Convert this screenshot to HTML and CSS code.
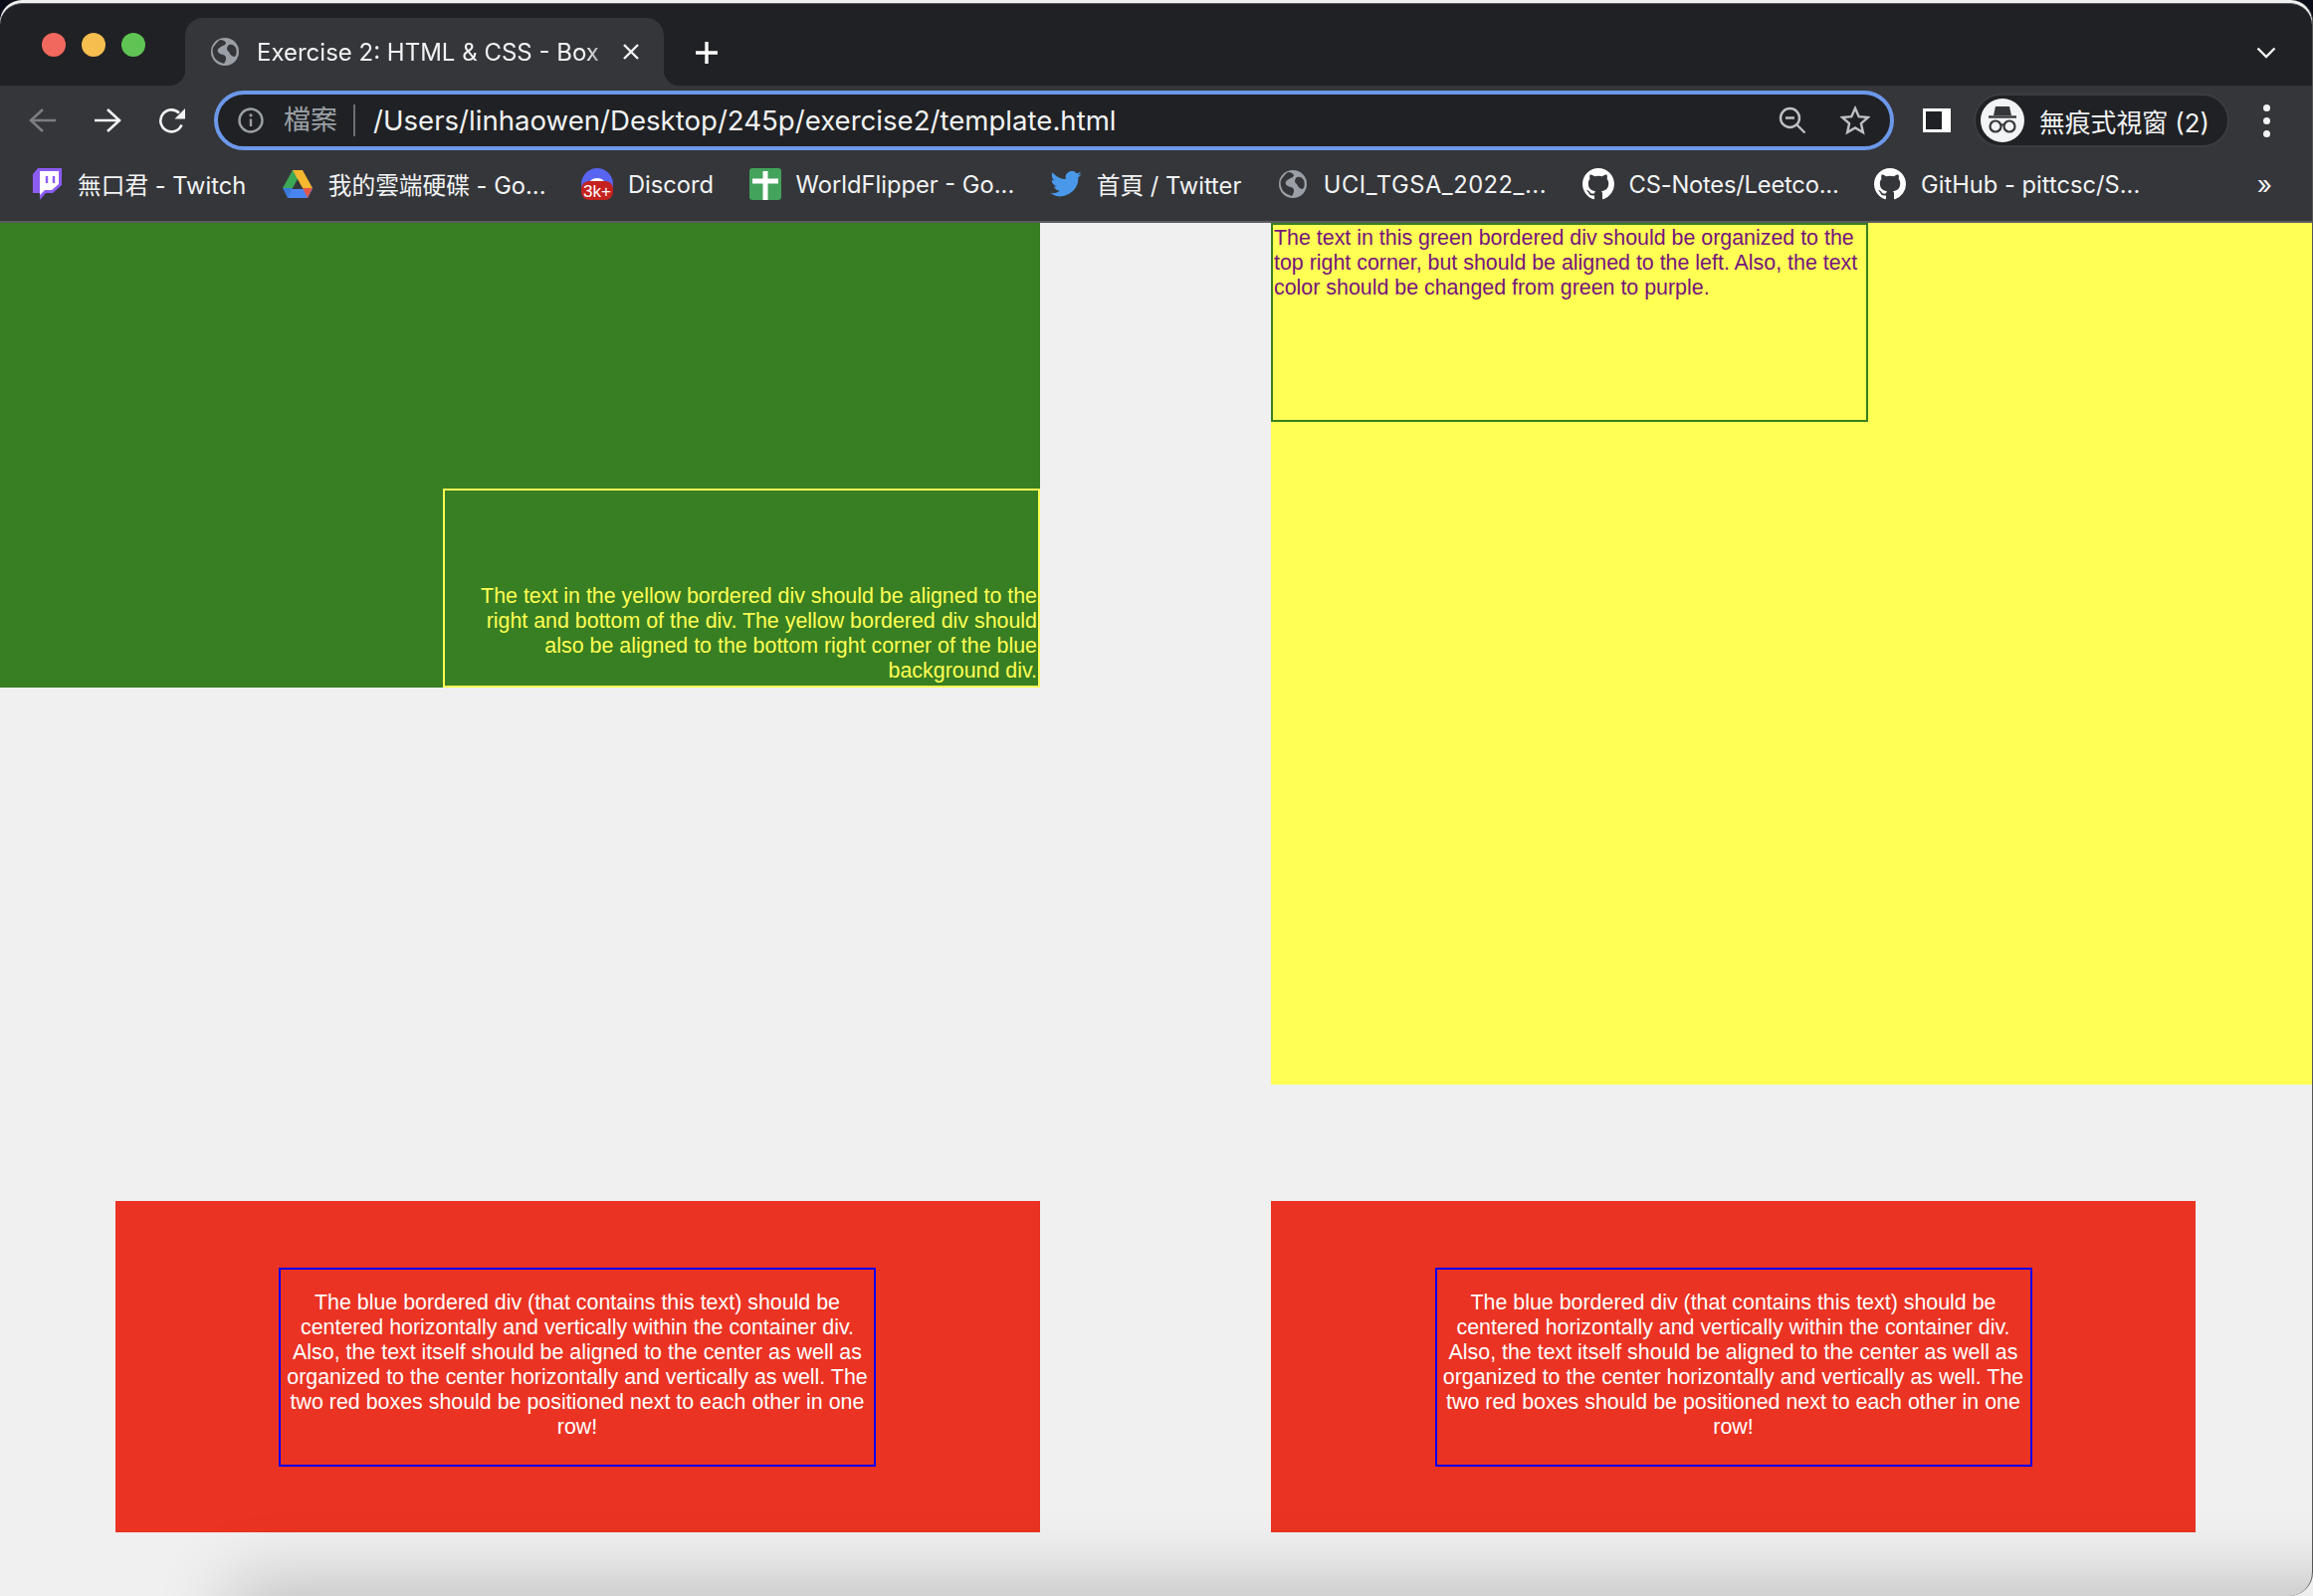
FILE: index.html
```html
<!DOCTYPE html>
<html lang="zh-Hant">
<head>
  <meta charset="UTF-8">
  <meta name="viewport" content="width=device-width, initial-scale=1.0">
  <title>Exercise 2: HTML &amp; CSS - Box Model</title>
  <link rel="stylesheet" href="styles.css">
</head>
<body>
  <svg class="sprites" width="0" height="0">
    <symbol id="globe" viewBox="0 0 28 28">
      <circle cx="14" cy="14" r="14" fill="#9aa0a6"/>
      <path d="M9 2c3 0 5 1 6 3 0 2-3 3-5 4-2 1-4 3-3 5 1 3 5 2 7 4 2 2 1 5-1 8-3-1-8-3-10-7-1-3-2-6-1-9 2-3 4-6 7-8zM18 7c3-1 5 0 7 3 1 3 1 7-1 9-2 0-4-1-5-3-1-3-3-3-3-5 0-2 1-3 2-4z" fill="#35363a"/>
    </symbol>
    <symbol id="github" viewBox="0 0 16 16">
      <path fill="#fff" d="M8 0C3.58 0 0 3.58 0 8c0 3.54 2.29 6.53 5.47 7.59.4.07.55-.17.55-.38 0-.19-.01-.82-.01-1.49-2.01.37-2.53-.49-2.69-.94-.09-.23-.48-.94-.82-1.13-.28-.15-.68-.52-.01-.53.63-.01 1.08.58 1.23.82.72 1.21 1.87.87 2.33.66.07-.52.28-.87.51-1.07-1.78-.2-3.64-.89-3.64-3.95 0-.87.31-1.59.82-2.15-.08-.2-.36-1.02.08-2.12 0 0 .67-.21 2.2.82.64-.18 1.32-.27 2-.27s1.36.09 2 .27c1.53-1.04 2.2-.82 2.2-.82.44 1.1.16 1.92.08 2.12.51.56.82 1.27.82 2.15 0 3.07-1.87 3.75-3.65 3.95.29.25.54.73.54 1.48 0 1.07-.01 1.93-.01 2.2 0 .21.15.46.55.38A8.01 8.01 0 0 0 16 8c0-4.42-3.58-8-8-8z"/>
    </symbol>
  </svg>

  <div class="window">
    <header class="tab-strip">
      <div class="lights">
        <span class="light light-red"></span>
        <span class="light light-yellow"></span>
        <span class="light light-green"></span>
      </div>
      <div class="tab">
        <svg class="favicon" width="28" height="28"><use href="#globe"/></svg>
        <span class="tab-title">Exercise 2: HTML &amp; CSS - Box</span>
        <svg class="tab-close" width="16" height="16" viewBox="0 0 16 16"><path d="M1 1l14 14M15 1L1 15" stroke="#f1f3f4" stroke-width="2.4" fill="none"/></svg>
      </div>
      <svg class="new-tab" width="24" height="24" viewBox="0 0 24 24"><path d="M12 1v22M1 12h22" stroke="#fff" stroke-width="3.4" fill="none"/></svg>
      <svg class="tab-search" width="20" height="12" viewBox="0 0 20 12"><path d="M1.5 1.5L10 10l8.500-8.500" stroke="#f1f3f4" stroke-width="2.400" fill="none"/></svg>
    </header>

    <div class="toolbar">
      <div class="nav-row">
        <svg class="nav-icon back" width="28" height="26" viewBox="0 0 28 26"><path d="M27 13H3M14 2L2 13l12 11" stroke="#7c7e82" stroke-width="2.600" fill="none"/></svg>
        <svg class="nav-icon forward" width="28" height="26" viewBox="0 0 28 26"><path d="M1 13h24M14 2l12 11-12 11" stroke="#f1f3f4" stroke-width="2.600" fill="none"/></svg>
        <svg class="nav-icon reload" width="28" height="26" viewBox="0 0 28 26"><path d="M23.500 17.500A11 11 0 1 1 21 5.500" stroke="#f1f3f4" stroke-width="2.600" fill="none"/><path d="M27 1v10.500H16.500z" fill="#f1f3f4"/></svg>
        <div class="omnibox">
          <svg class="info-icon" width="26" height="26" viewBox="0 0 26 26"><circle cx="13" cy="13" r="11.500" stroke="#9aa0a6" stroke-width="2.400" fill="none"/><path d="M13 11.500v7.500" stroke="#9aa0a6" stroke-width="2.400"/><circle cx="13" cy="7.800" r="1.600" fill="#9aa0a6"/></svg>
          <span class="scheme">檔案</span>
          <span class="url">/Users/linhaowen/Desktop/245p/exercise2/template.html</span>
          <svg class="zoom-icon" width="28" height="28" viewBox="0 0 28 28"><circle cx="11.500" cy="11.500" r="9.500" stroke="#bdc1c6" stroke-width="2.400" fill="none"/><path d="M7 11.500h9M18.500 18.500l8 8" stroke="#bdc1c6" stroke-width="2.400" fill="none"/></svg>
          <svg class="star-icon" width="30" height="30" viewBox="0 0 30 30"><path d="M15 2.800l3.700 8.400 9 .9-6.800 6 2 9L15 22.500l-7.900 4.600 2-9-6.800-6 9-.9z" stroke="#bdc1c6" stroke-width="2.400" fill="none"/></svg>
        </div>
        <span class="side-panel"></span>
        <div class="profile-chip">
          <span class="incognito">
            <svg width="44" height="44" viewBox="0 0 44 44"><path d="M15 8h14l2 9H13z" fill="#35363a"/><path d="M8 18.500h28" stroke="#35363a" stroke-width="2.400"/><circle cx="15" cy="28" r="5.500" stroke="#35363a" stroke-width="2.200" fill="none"/><circle cx="29" cy="28" r="5.500" stroke="#35363a" stroke-width="2.200" fill="none"/><path d="M20 27q2-1.500 4 0" stroke="#35363a" stroke-width="2" fill="none"/></svg>
          </span>
          <span class="profile-label">無痕式視窗 (2)</span>
        </div>
        <div class="kebab"><i></i><i></i><i></i></div>
      </div>

      <nav class="bookmarks">
        <a class="bookmark">
          <svg width="32" height="34" viewBox="0 0 30 34"><path d="M6 1h24v17l-9 8h-7l-6 7v-7H1V7z" fill="#8c5cf5"/><path d="M8 4h19v13l-7 6h-7l-5 5V4z" fill="#fff"/><path d="M15 9v7M22 9v7" stroke="#8c5cf5" stroke-width="2.400"/></svg>
          <span>無口君 - Twitch</span>
        </a>
        <a class="bookmark">
          <svg width="32" height="30" viewBox="0 0 32 30"><path d="M11 1h10l-10 18H1z" fill="#3ba757"/><path d="M11 1h10l10 18H21z" fill="#f5b82e"/><path d="M7 20h24l-5 9H6z" fill="#4a84f0"/><path d="M1 19h10l-5 10z" fill="#3a79d8"/><path d="M21 19h10l-5 10z" fill="#e2574c"/></svg>
          <span>我的雲端硬碟 - Go...</span>
        </a>
        <a class="bookmark">
          <svg width="32" height="32" viewBox="0 0 32 32"><circle cx="16" cy="16" r="16" fill="#5865f2"/><path d="M9 13c3-4 11-4 14 0z" fill="#fff"/><rect x="0" y="13" width="32" height="19" rx="8" fill="#c5221f"/><text class="badge-text" x="16" y="28.500" text-anchor="middle">3k+</text></svg>
          <span>Discord</span>
        </a>
        <a class="bookmark">
          <svg width="32" height="32" viewBox="0 0 32 32"><rect width="32" height="32" rx="3" fill="#43a35c"/><path d="M3 13h26M16 3v29" stroke="#fff" stroke-width="5" fill="none"/></svg>
          <span>WorldFlipper - Go...</span>
        </a>
        <a class="bookmark">
          <svg width="32" height="26" viewBox="0 0 24 20"><path fill="#4a98e9" d="M24 2.400c-.9.400-1.800.700-2.800.800 1-.600 1.800-1.600 2.200-2.700-1 .600-2 1-3.100 1.200A4.900 4.900 0 0 0 11.900 6.200C7.800 6 4.200 4.100 1.700.9c-1.300 2.300-.600 5.100 1.500 6.500-.800 0-1.600-.200-2.200-.600 0 2.300 1.600 4.400 3.900 4.900-.7.200-1.500.2-2.200.1.600 2 2.400 3.300 4.600 3.400A9.900 9.900 0 0 1 0 17.100 13.900 13.900 0 0 0 21.500 4.900c1-.7 1.800-1.500 2.500-2.500z"/></svg>
          <span>首頁 / Twitter</span>
        </a>
        <a class="bookmark bookmark-wide">
          <svg width="32" height="28"><use href="#globe"/></svg>
          <span>UCI_TGSA_2022_...</span>
        </a>
        <a class="bookmark bookmark-tight">
          <svg width="32" height="32"><use href="#github"/></svg>
          <span>CS-Notes/Leetco...</span>
        </a>
        <a class="bookmark">
          <svg width="32" height="32"><use href="#github"/></svg>
          <span>GitHub - pittcsc/S...</span>
        </a>
        <span class="more">»</span>
      </nav>
    </div>

    <main class="page">
      <section class="blue-bg">
        <div class="yellow-border">The text in the yellow bordered div should be aligned to the right and bottom of the div. The yellow bordered div should also be aligned to the bottom right corner of the blue background div.</div>
      </section>
      <section class="yellow-bg">
        <div class="green-border">The text in this green bordered div should be organized to the top right corner, but should be aligned to the left. Also, the text color should be changed from green to purple.</div>
      </section>
      <section class="red-box red-left">
        <div class="blue-border">The blue bordered div (that contains this text) should be centered horizontally and vertically within the container div. Also, the text itself should be aligned to the center as well as organized to the center horizontally and vertically as well. The two red boxes should be positioned next to each other in one row!</div>
      </section>
      <section class="red-box red-right">
        <div class="blue-border">The blue bordered div (that contains this text) should be centered horizontally and vertically within the container div. Also, the text itself should be aligned to the center as well as organized to the center horizontally and vertically as well. The two red boxes should be positioned next to each other in one row!</div>
      </section>
    </main>
    <div class="dock-shadow"></div>
  </div>
</body>
</html>
```

FILE: styles.css
```css
* {
  box-sizing: border-box;
}
html, body {
  margin: 0;
  height: 100%;
  overflow: hidden;
}
body {
  background: linear-gradient(#0b0d18 0 50%, #eeeeee 50%);
  font-family: Inter, "Noto Sans CJK TC", sans-serif;
}
.sprites {
  position: absolute;
}
.window {
  position: relative;
  height: 1604px;
  padding-top: 3px;
  overflow: hidden;
  border-radius: 22px 22px 24px 0;
  display: flex;
  flex-direction: column;
  background: #f0f0f0;
  border-right: 1px solid #55575a;
}

/* tab strip */
.tab-strip {
  display: flex;
  align-items: flex-start;
  height: 83px;
  flex: none;
  background: #202124;
  border-top: 1px solid #5b5c60;
  border-radius: 22px 22px 0 0;
}
.lights {
  display: flex;
  gap: 16px;
  padding: 29px 0 0 42px;
  width: 186px;
}
.light {
  width: 24px;
  height: 24px;
  border-radius: 50%;
}
.light-red { background: #f1695e; }
.light-yellow { background: #f6bd4f; }
.light-green { background: #5fc454; }
.tab {
  position: relative;
  display: flex;
  align-items: center;
  width: 481px;
  height: 68px;
  margin-top: 14px;
  padding: 0 25px 0 26px;
  background: #35363a;
  border-radius: 18px 18px 0 0;
  color: #f1f3f4;
}
.tab::before,
.tab::after {
  content: "";
  position: absolute;
  bottom: 0;
  width: 16px;
  height: 16px;
}
.tab::before {
  left: -16px;
  background: radial-gradient(circle at 0 0, #202124 16px, #35363a 16.5px);
}
.tab::after {
  right: -16px;
  background: radial-gradient(circle at 100% 0, #202124 16px, #35363a 16.5px);
}
.favicon {
  flex: none;
  margin-right: 18px;
}
.tab-title {
  flex: 1;
  white-space: nowrap;
  font-size: 24px;
  -webkit-mask-image: linear-gradient(to right, #000 90%, transparent 99%);
  mask-image: linear-gradient(to right, #000 90%, transparent 99%);
}
.tab-close {
  flex: none;
}
.new-tab {
  margin: 37px 0 0 31px;
}
.tab-search {
  margin: 43px 36px 0 auto;
}

/* toolbar */
.toolbar {
  flex: none;
  height: 138px;
  background: #35363a;
  border-bottom: 2px solid #5a5c5f;
  color: #f1f3f4;
}
.nav-row {
  display: flex;
  align-items: center;
  height: 70px;
  padding: 0 28px 0 29px;
}
.nav-icon {
  flex: none;
}
.forward,
.reload {
  margin-left: 37px;
}
.omnibox {
  display: flex;
  align-items: center;
  width: 1688px;
  height: 60px;
  margin-left: 28px;
  padding: 0 20px;
  background: #202124;
  border: 4px solid #6c98ea;
  border-radius: 30px;
}
.scheme {
  color: #9aa0a6;
  font-size: 27px;
  margin-left: 20px;
  padding-right: 16px;
  border-right: 2px solid #6b6e72;
  line-height: 32px;
}
.url {
  flex: 1;
  margin-left: 18px;
  font-size: 27.6px;
  white-space: nowrap;
}
.star-icon {
  margin-left: 34px;
}
.side-panel {
  flex: none;
  width: 28px;
  height: 24px;
  margin-left: 29px;
  background: #202124;
  border: solid #fff;
  border-width: 3px 9px 3px 3px;
}
.profile-chip {
  display: flex;
  align-items: center;
  flex: none;
  width: 257px;
  height: 54px;
  margin-left: 23px;
  padding-left: 5px;
  background: #202124;
  border: 2px solid #3c3d41;
  border-radius: 27px;
}
.incognito {
  display: block;
  width: 44px;
  height: 44px;
  border-radius: 50%;
  background: #f1f3f4;
}
.incognito svg {
  display: block;
}
.profile-label {
  margin-left: 15px;
  font-size: 25.8px;
  white-space: nowrap;
}
.kebab {
  display: flex;
  flex-direction: column;
  gap: 6px;
  margin-left: 34px;
}
.kebab i {
  display: block;
  width: 7px;
  height: 7px;
  border-radius: 50%;
  background: #f1f3f4;
}

/* bookmarks */
.bookmarks {
  display: flex;
  align-items: center;
  height: 66px;
  gap: 35.5px;
  padding: 0 30px 8px 31px;
}
.bookmark {
  display: flex;
  align-items: center;
  gap: 15px;
  font-size: 23.7px;
  white-space: nowrap;
}
.bookmark svg {
  flex: none;
}
.bookmark-wide span {
  letter-spacing: 0.55px;
}
.bookmark-tight span {
  letter-spacing: -0.2px;
}
.badge-text {
  fill: #fff;
  font-size: 17px;
  font-family: "Liberation Sans", sans-serif;
}
.more {
  margin-left: auto;
  padding-right: 10px;
  font-size: 26px;
}

/* exercise page */
.page {
  flex: 1;
  display: grid;
  grid-template-columns: 1045px 1fr;
  grid-template-rows: 866px 333px;
  column-gap: 232px;
  row-gap: 117px;
  align-items: start;
  font-family: "Liberation Sans", Arial, sans-serif;
  font-size: 21.4px;
  line-height: 25px;
}
.blue-bg {
  display: flex;
  justify-content: flex-end;
  align-items: flex-end;
  height: 467px;
  background: #387e22;
}
.yellow-border {
  display: flex;
  align-items: flex-end;
  width: 600px;
  height: 200px;
  padding: 2px 1px 2px 2px;
  border: 2px solid #ffff54;
  color: #ffff54;
  text-align: right;
}
.yellow-bg {
  height: 866px;
  background: #ffff54;
}
.green-border {
  width: 600px;
  height: 200px;
  padding: 1px 2px 0 1px;
  border: 2px solid #387e22;
  color: #75147c;
}
.red-box {
  display: flex;
  align-items: center;
  justify-content: center;
  width: 929px;
  height: 333px;
  background: #ea3323;
}
.red-left {
  justify-self: end;
  padding-right: 1px;
}
.red-right {
  justify-self: start;
}
.blue-border {
  display: flex;
  align-items: center;
  width: 600px;
  height: 200px;
  padding: 0 6px 4px;
  border: 2px solid #0000f5;
  color: #fff;
  text-align: center;
}
.dock-shadow {
  position: absolute;
  left: 240px;
  right: -120px;
  bottom: -60px;
  height: 60px;
  box-shadow: 0 0 75px 8px rgba(0, 0, 0, 0.24);
}
```
